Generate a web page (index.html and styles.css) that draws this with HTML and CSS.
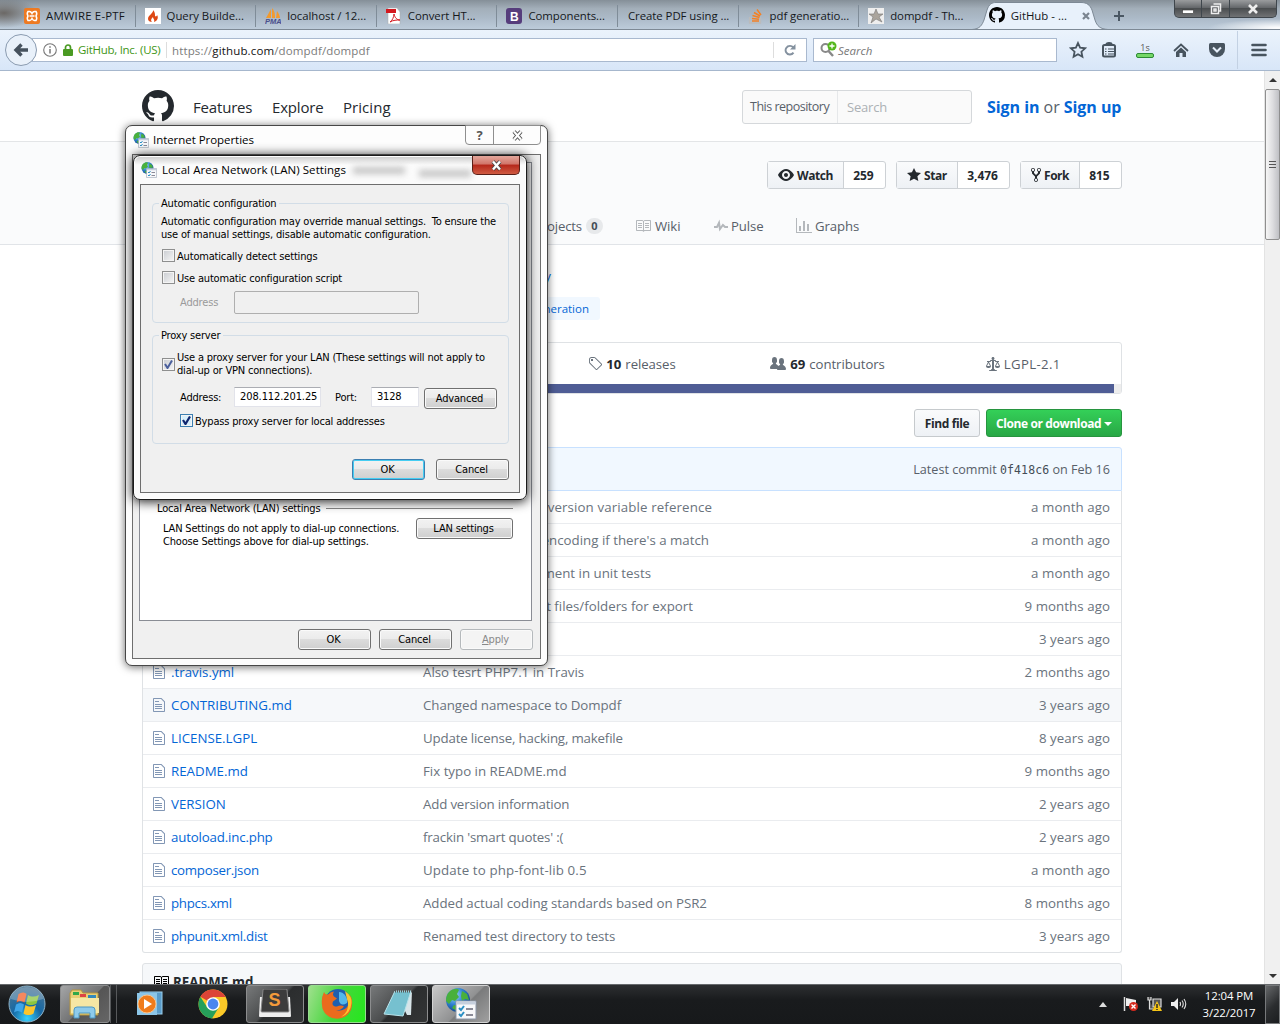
FILE: index.html
```html
<!DOCTYPE html>
<html lang="en">
<head>
<meta charset="utf-8">
<title>GitHub - dompdf/dompdf</title>
<link rel="stylesheet" href="styles.css">
</head>
<body>
<svg class="defs" width="0" height="0">
  <defs>
    <symbol id="mark" viewBox="0 0 16 16"><path d="M8 0C3.58 0 0 3.58 0 8c0 3.54 2.29 6.53 5.47 7.59.4.07.55-.17.55-.38 0-.19-.01-.82-.01-1.49-2.01.37-2.53-.49-2.69-.94-.09-.23-.48-.94-.82-1.13-.28-.15-.68-.52-.01-.53.63-.01 1.08.58 1.23.82.72 1.21 1.87.87 2.33.66.07-.52.28-.87.51-1.07-1.78-.2-3.64-.89-3.64-3.95 0-.87.31-1.59.82-2.15-.08-.2-.36-1.02.08-2.12 0 0 .67-.21 2.2.82.64-.18 1.32-.27 2-.27.68 0 1.36.09 2 .27 1.53-1.04 2.2-.82 2.2-.82.44 1.1.16 1.92.08 2.12.51.56.82 1.27.82 2.15 0 3.07-1.87 3.75-3.65 3.95.29.25.54.73.54 1.48 0 1.07-.01 1.93-.01 2.2 0 .21.15.46.55.38A8.013 8.013 0 0 0 16 8c0-4.42-3.58-8-8-8z"/></symbol>
    <symbol id="file" viewBox="0 0 12 16"><path d="M6 5H2V4h4v1zM2 8h7V7H2v1zm0 2h7V9H2v1zm0 2h7v-1H2v1zm10-7.5V14c0 .55-.45 1-1 1H1c-.55 0-1-.45-1-1V2c0-.55.45-1 1-1h7.5L12 4.5zM11 5L8 2H1v12h10V5z"/></symbol>
    <symbol id="book" viewBox="0 0 16 16"><path d="M3 5h4v1H3V5zm0 3h4V7H3v1zm0 2h4V9H3v1zm11-5h-4v1h4V5zm0 2h-4v1h4V7zm0 2h-4v1h4V9zm2-6v9c0 .55-.45 1-1 1H9.5l-1 1-1-1H2c-.55 0-1-.45-1-1V3c0-.55.45-1 1-1h5.500l1 1 1-1H15c.55 0 1 .45 1 1zm-8 .5L7.500 3H2v9h6V3.500zm7-.5H9.500l-.5.5V12h6V3z"/></symbol>
    <radialGradient id="globeFill" cx=".35" cy=".3" r=".8"><stop offset="0" stop-color="#9fdcff"/><stop offset=".5" stop-color="#2d7fd0"/><stop offset="1" stop-color="#123a7a"/></radialGradient>
    <symbol id="netprops" viewBox="0 0 32 32">
      <circle cx="13" cy="12" r="12" fill="url(#globeFill)"/>
      <path d="M4 4c4-4 9-4 10-2l-2 4 2 3-4 4-3-1-3 4-3-3c0-4 1-7 3-9zM17 3l5 3 2 6-4-1-3 2-1-5zM9 17l5 1 1 5h-3l-5-3z" fill="#49b03c"/>
      <path d="M11 13h20v18H11z" fill="#f7f8fa" stroke="#8b97a8"/><path d="M11.500 13.500h19v3h-19z" fill="#c5cfdd"/>
      <path d="M14 20l2 2 3-4M14 26l2 2 3-4" fill="none" stroke="#2a8fc4" stroke-width="2"/><path d="M21 21h7M21 27h7" stroke="#667" stroke-width="1.500"/>
    </symbol>
  </defs>
</svg>

<div class="screen">
  <header class="tabstrip">
    <div class="tabs">
      <div class="tab"><svg class="fav" viewBox="0 0 16 16"><rect width="16" height="16" rx="2" fill="#ee7a22"/><path d="M4 3.500h1.500Q7 3.500 8 5.500 9 3.500 10.500 3.500H12q1.500 2 0 4.500 1.500 2.500 0 4.500h-1.500Q9 12.500 8 10.500 7 12.500 5.500 12.500H4Q2.500 10.500 4 8 2.500 5.500 4 3.500zM5.500 8h5" fill="none" stroke="#fff" stroke-width="1.500"/></svg><span class="t1">AMWIRE E-PTF</span></div>
      <div class="tab"><svg class="fav" viewBox="0 0 16 16"><rect width="16" height="16" fill="#fff"/><path d="M8 2c1 3-5 5-5 9 0 2 2 3 4 3-2-2 0-4 1-5 0 2 2 2 1 5 3-1 5-4 3-7 0 1-1 2-2 1 0-2 0-4-2-6z" fill="#dd4814"/></svg><span>Query Builde...</span></div>
      <div class="tab"><svg class="fav" viewBox="0 0 16 16"><path d="M1 10L6 1v9zM7 10V0c3 3 3 7 3 10zM11 10l1-7c2 3 3 5 3 7z" fill="#f29a2e"/><text x="0" y="15.500" class="pma">PMA</text></svg><span>localhost / 12...</span></div>
      <div class="tab"><svg class="fav" viewBox="0 0 16 16"><path d="M2 0h9l3 4v12H2z" fill="#fff" stroke="#aaa" stroke-width=".5"/><path d="M0 1h10v4H0z" fill="#d4181f"/><path d="M4 14c2-1 4-5 4-8 1 4 3 6 6 6-3 0-7 0-10 2z" fill="none" stroke="#d4181f"/></svg><span>Convert HT...</span></div>
      <div class="tab"><svg class="fav" viewBox="0 0 16 16"><rect width="16" height="16" rx="3" fill="#563d7c"/><text x="4" y="12.500" class="bs">B</text></svg><span>Components...</span></div>
      <div class="tab tab-plain"><span>Create PDF using ...</span></div>
      <div class="tab"><svg class="fav" viewBox="0 0 16 16"><path d="M1.500 9v6h11V9" fill="none" stroke="#bbb" stroke-width="1.300"/><path d="M4 13h7M4 10.500l7 .8M4.500 7.500l7 2M6 4.500l6 3.500M9 1.500l4 5.500" stroke="#f48024" stroke-width="1.500"/></svg><span>pdf generatio...</span></div>
      <div class="tab"><svg class="fav" viewBox="0 0 16 16"><rect width="16" height="16" fill="#eee"/><path d="M8 1l2 5h5l-4 3 3 5-6-3-5 4 2-6-4-3h5z" fill="#aaa49c" stroke="#777" stroke-width=".6"/></svg><span>dompdf - Th...</span></div>
    </div>
    <div class="activetab">
      <svg class="tabshape" width="136" height="30" viewBox="0 0 136 30"><path d="M0 29.500C8 29 10 25 12 20L15 10C17 4 20 2.500 24 2.500H109C115 2.500 118 5 120 10L123 20C125 26 128 29 136 29.500V30H0z" fill="#e8f1fb"/><path d="M0 29.500C8 29 10 25 12 20L15 10C17 4 20 2.500 24 2.500H109C115 2.500 118 5 120 10L123 20C125 26 128 29 136 29.500" fill="none" stroke="#7d8995"/></svg>
      <svg class="fav"><use href="#mark"/></svg><span>GitHub - ...</span>
      <svg class="tabx" width="8" height="8"><path d="M1 1l6 6M7 1l-6 6" stroke="#7b8590" stroke-width="2.200"/></svg>
    </div>
    <svg class="plus" width="12" height="12"><path d="M6 1v10M1 6h10" stroke="#4a5763" stroke-width="2"/></svg>
    <div class="winbtns"><i><svg width="12" height="12"><rect x=".5" y="7" width="11" height="3.500" fill="#fff" stroke="#333" stroke-width=".6"/></svg></i><i><svg width="12" height="12"><path d="M3.500 1h7v7h-2M1.500 3.500h7v7h-7z M4 6h2v2H4z" fill="none" stroke="#eee" stroke-width="1.500"/></svg></i><i class="wide"><svg width="12" height="12"><path d="M2 2l8 8M10 2l-8 8" stroke="#eee" stroke-width="2.600"/></svg></i></div>
  </header>

  <nav class="toolbar">
    <div class="back"><svg width="16" height="16"><path d="M15 8H3M8.500 2.500L3 8l5.500 5.500" fill="none" stroke="#46525e" stroke-width="3.400"/></svg></div>
    <div class="url">
      <svg width="14" height="14"><circle cx="7" cy="7" r="6.300" fill="none" stroke="#777" stroke-width="1.100"/><path d="M7 6v4.500M7 3.300v1.500" stroke="#777" stroke-width="1.500"/></svg>
      <svg class="lock" width="10" height="12"><path d="M2.500 6V3.500a2.500 2.500 0 015 0V6" fill="none" stroke="#4a9a22" stroke-width="1.700"/><rect y="5" width="10" height="7" rx="1" fill="#4a9a22"/></svg>
      <span class="ident">GitHub, Inc. (US)</span>
      <span class="addr">https://<b>github.com</b>/dompdf/dompdf</span>
      <span class="reload"><svg width="12" height="12"><path d="M9.500 8.600A4.300 4.300 0 116 1.900c1.500 0 2.500.6 3.400 1.600" fill="none" stroke="#84919f" stroke-width="1.900"/><path d="M11.500 0v5.500H6z" fill="#84919f"/></svg></span>
    </div>
    <div class="search"><svg width="18" height="18"><circle cx="5.500" cy="7" r="4" fill="none" stroke="#888" stroke-width="2"/><path d="M8.500 10l4.500 5" stroke="#888" stroke-width="2.400"/><circle cx="12" cy="5" r="4.500" fill="#54b71c"/><path d="M12 2.500v5M9.500 5h5" stroke="#fff" stroke-width="1.300"/></svg><em>Search</em></div>
    <div class="tools">
      <svg width="18" height="18"><path d="M9 2l2.100 4.700 5 .6-3.700 3.400 1 5L9 13.200l-4.400 2.500 1-5L1.900 7.300l5-.6z" fill="none" stroke="#48545f" stroke-width="1.800"/></svg>
      <svg class="clip" width="16" height="18"><rect x="2" y="4" width="12" height="11.500" rx="1.500" fill="none" stroke="#48545f" stroke-width="2"/><path d="M5 3.500C5 1 11 1 11 3.500zM4 8h1.500M7 8h7M4 10.500h1.500M7 10.500h7M4 13h1.500M7 13h7" fill="#48545f" stroke="#48545f" stroke-width="1.100"/></svg>
      <div class="timer"><span>1s</span><i></i></div>
      <svg class="home" width="16" height="16"><path d="M1 9l7-6.500L15 9" fill="none" stroke="#48545f" stroke-width="1.800"/><path d="M3 10l5-4.500 5 4.500v5H9.500v-4h-3v4H3z" fill="#48545f"/></svg>
      <svg class="pocket" width="16" height="16"><path d="M0 2.500Q0 1 1.500 1h13Q16 1 16 2.500V7a8 8 0 01-16 0z" fill="#48545f"/><path d="M4 5.500L8 9.500l4-4" fill="none" stroke="#e6effa" stroke-width="2"/></svg>
      <div class="menu"><svg width="16" height="14"><path d="M1.500 2h13M1.500 7h13M1.500 12h13" stroke="#48545f" stroke-width="2.600" stroke-linecap="round"/></svg></div>
    </div>
  </nav>

  <div class="viewport">
    <main class="page">
      <div class="ghhead"><div class="wrap">
        <svg class="logo"><use href="#mark"/></svg>
        <span class="n1">Features</span><span class="n2">Explore</span><span class="n3">Pricing</span>
        <div class="ghsearch"><span>This repository</span><em>Search</em></div>
        <div class="sign"><b>Sign in</b> or <b>Sign up</b></div>
      </div></div>

      <div class="repohead">
        <div class="wrap social">
          <div class="btnset"><span class="btn w1"><svg width="16" height="16"><path d="M8.060 2C3 2 0 8 0 8s3 6 8.060 6C13 14 16 8 16 8s-3-6-7.940-6zM8 12c-2.200 0-4-1.780-4-4 0-2.200 1.800-4 4-4 2.220 0 4 1.800 4 4 0 2.220-1.780 4-4 4zm2-4c0 1.110-.89 2-2 2-1.110 0-2-.89-2-2 0-1.110.89-2 2-2 1.110 0 2 .89 2 2z"/></svg>Watch</span><span class="cnt c1">259</span></div>
          <div class="btnset"><span class="btn w2"><svg width="14" height="16"><path d="M14 6l-4.900-.64L7 1 4.900 5.360 0 6l3.600 3.260L2.670 14 7 11.670 11.330 14l-.93-4.740z"/></svg>Star</span><span class="cnt c2">3,476</span></div>
          <div class="btnset"><span class="btn w3"><svg width="10" height="16"><path fill-rule="evenodd" d="M8 1a1.993 1.993 0 0 0-1 3.720V6L5 8 3 6V4.720A1.993 1.993 0 0 0 2 1a1.993 1.993 0 0 0-1 3.720V6.500l3 3v1.780A1.993 1.993 0 0 0 5 15a1.993 1.993 0 0 0 1-3.720V9.500l3-3V4.720A1.993 1.993 0 0 0 8 1zM2 4.200C1.340 4.200.8 3.650.8 3c0-.65.55-1.200 1.200-1.200.65 0 1.200.55 1.200 1.200 0 .65-.55 1.200-1.200 1.200zm3 10c-.66 0-1.200-.55-1.200-1.200 0-.65.55-1.200 1.200-1.200.65 0 1.200.55 1.200 1.200 0 .65-.55 1.200-1.200 1.200zm3-10c-.66 0-1.200-.55-1.200-1.200 0-.65.55-1.200 1.200-1.200.65 0 1.200.55 1.200 1.200 0 .65-.55 1.200-1.200 1.200z"/></svg>Fork</span><span class="cnt c3">815</span></div>
        </div>
        <div class="wrap reponav">
          <span class="projects">Projects</span><span class="badge">0</span>
          <span class="item i1"><svg width="16" height="16"><use href="#book"/></svg>Wiki</span>
          <span class="item i2"><svg width="14" height="16"><path d="M11.500 8L8.800 5.400 6.600 8.500 5.500 1.600 2.380 8H0v2h3.600l.9-1.800.9 5.400L9 8.500l1.600 1.500H14V8z"/></svg>Pulse</span>
          <span class="item i3"><svg width="16" height="16"><path d="M16 14v1H0V0h1v14h15zM5 13H3V8h2v5zm4 0H7V3h2v10zm4 0h-2V6h2v7z"/></svg>Graphs</span>
        </div>
      </div>

      <div class="wrap body">
        <div class="desc"><a>library</a></div>
        <div class="topics"><a>pdf-generation</a></div>
        <div class="stats">
          <div class="statgrid">
            <div></div><div></div>
            <div><svg width="14" height="16"><path d="M7.730 1.730C7.260 1.260 6.620 1 5.960 1H3.500C2.130 1 1 2.130 1 3.500v2.470c0 .66.27 1.300.73 1.770l6.060 6.060c.39.39 1.020.39 1.410 0l4.590-4.590a.996.996 0 0 0 0-1.410L7.730 1.730zM2.380 7.090c-.31-.3-.47-.7-.47-1.130V3.500c0-.88.72-1.590 1.590-1.590h2.470c.42 0 .83.16 1.130.47l6.140 6.130-4.730 4.730-6.130-6.150zM3.010 3h2v2H3V3h.01z" fill-rule="evenodd"/></svg><b>10</b> releases</div>
            <div><svg width="16" height="16"><path d="M16 12.999c0 .439-.45 1-1 1H7.995c-.539 0-.994-.447-.995-.999H1c-.54 0-1-.561-1-1 0-2.634 3-4 3-4s.229-.409 0-1c-.841-.621-1.058-.59-1-3 .058-2.419 1.367-3 2.500-3s2.442.58 2.500 3c.058 2.410-.159 2.379-1 3-.229.59 0 1 0 1s1.549.711 2.420 2.088C9.196 9.369 10 8.999 10 8.999s.229-.409 0-1c-.841-.62-1.058-.59-1-3 .058-2.419 1.367-3 2.500-3s2.437.581 2.495 3c.059 2.410-.158 2.380-1 3-.229.59 0 1 0 1s3.005 1.366 3.005 4z"/></svg><b>69</b> contributors</div>
            <div><svg width="14" height="16"><path fill-rule="evenodd" d="M7 4c-.83 0-1.500-.67-1.500-1.500S6.170 1 7 1s1.500.67 1.500 1.500S7.830 4 7 4zm7 6c0 1.110-.89 2-2 2h-1c-1.110 0-2-.89-2-2l2-4h-1c-.55 0-1-.45-1-1H8v8c.42 0 1 .45 1 1h1c.42 0 1 .45 1 1H3c0-.55.58-1 1-1h1c0-.55.58-1 1-1h.03L6 5H5c0 .55-.45 1-1 1H3l2 4c0 1.110-.89 2-2 2H2c-1.110 0-2-.89-2-2l2-4H1V5h3c0-.55.45-1 1-1h4c.55 0 1 .45 1 1h3v1h-1l2 4zM2.500 7L1 10h3L2.500 7zM13 10l-1.500-3-1.500 3h3z"/></svg><span class="lic">LGPL-2.1</span></div>
          </div>
          <div class="lang"><i></i></div>
        </div>
        <div class="actions"><span class="find">Find file</span><span class="clone">Clone or download <i></i></span></div>
        <div class="commit">Latest commit <code>0f418c6</code> on Feb 16</div>
        <div class="files">
          <div class="row"><span class="msg cut m1">in version variable reference</span><time>a month ago</time></div>
          <div class="row"><span class="msg cut m2">encoding if there's a match</span><time>a month ago</time></div>
          <div class="row"><span class="msg cut m3">improvement in unit tests</span><time>a month ago</time></div>
          <div class="row"><span class="msg cut m4">relevant files/folders for export</span><time>9 months ago</time></div>
          <div class="row"><time>3 years ago</time></div>
          <div class="row"><svg><use href="#file"/></svg><a>.travis.yml</a><span class="msg">Also tesrt PHP7.1 in Travis</span><time>2 months ago</time></div>
          <div class="row hover"><svg><use href="#file"/></svg><a>CONTRIBUTING.md</a><span class="msg tight">Changed namespace to Dompdf</span><time>3 years ago</time></div>
          <div class="row"><svg><use href="#file"/></svg><a>LICENSE.LGPL</a><span class="msg tighter">Update license, hacking, makefile</span><time>8 years ago</time></div>
          <div class="row"><svg><use href="#file"/></svg><a>README.md</a><span class="msg">Fix typo in README.md</span><time>9 months ago</time></div>
          <div class="row"><svg><use href="#file"/></svg><a>VERSION</a><span class="msg tighter">Add version information</span><time>2 years ago</time></div>
          <div class="row"><svg><use href="#file"/></svg><a class="tighter">autoload.inc.php</a><span class="msg tighter">frackin 'smart quotes' :(</span><time>2 years ago</time></div>
          <div class="row"><svg><use href="#file"/></svg><a class="tighter2">composer.json</a><span class="msg wider">Update to php-font-lib 0.5</span><time>a month ago</time></div>
          <div class="row"><svg><use href="#file"/></svg><a class="tighter2">phpcs.xml</a><span class="msg tight">Added actual coding standards based on PSR2</span><time>8 months ago</time></div>
          <div class="row"><svg><use href="#file"/></svg><a class="tighter2">phpunit.xml.dist</a><span class="msg tight">Renamed test directory to tests</span><time>3 years ago</time></div>
        </div>
        <div class="readme"><svg width="16" height="16"><use href="#book"/></svg>README.md</div>
      </div>
    </main>
    <div class="scrollbar"><i class="up"></i><div class="thumb"></div><i class="down"></i></div>
  </div>

  <footer class="taskbar">
    <svg class="orb" width="38" height="38" viewBox="0 0 38 38"><defs><radialGradient id="orb" cx=".5" cy=".9" r=".9"><stop offset="0" stop-color="#35d2ff"/><stop offset=".45" stop-color="#1668a4"/><stop offset="1" stop-color="#4d7592"/></radialGradient></defs><circle cx="19" cy="19" r="18" fill="url(#orb)" stroke="#8fb3c8"/><path d="M10.500 9c3-2 6-2 8 0l-2 8.500c-3-2-5.500-2-8 0z" fill="#f0612a"/><path d="M20 10c3 2 7 2 11 0l-2.500 8.500c-4 2-7.500 2-10.500 0z" fill="#8cc63e"/><path d="M8 19.500c3-2 5.500-2 8 0l-2 8c-3-2-5.500-2-8 0z" fill="#3fa5e8"/><path d="M17.500 20c3 2 7 2 10.500 0l-2.500 8.500c-3 2-7 2-10 0z" fill="#fcc52c"/><path d="M3 14a16 12 0 0132 0q-16 6-32 0z" fill="#fff" opacity=".25"/></svg>
    <div class="task explorer"><svg width="34" height="30"><path d="M2 4l2-3h9l2 3h15v22H2z" fill="#e8cf74" stroke="#b4943e"/><path d="M5 3h6v3H5z" fill="#2fa84a"/><path d="M12 5h6v3h-6z" fill="#d44"/><path d="M20 6h8v3h-8z" fill="#38b"/><path d="M3 9h28v15H3z" fill="#f6e7a4"/><path d="M6 29v-8q0-3 3-3h15q3 0 3 3v8h-5v-5H11v5z" fill="#8ecbeb" stroke="#4c98c4"/></svg></div>
    <div class="stack"></div>
    <svg class="wmp" width="28" height="26"><rect x="4" y="1" width="22" height="22" fill="#5a9cc9" stroke="#9bd0ee"/><rect x="1" y="2" width="20" height="22" fill="#8cc6e8"/><circle cx="11" cy="13" r="9" fill="#f07c1c" stroke="#fbc38a"/><path d="M8 8l8 5-8 5z" fill="#fff"/></svg>
    <svg class="chrome" width="30" height="30" viewBox="0 0 30 30"><circle cx="15" cy="15" r="14.500" fill="#fbc928"/><path d="M15 15L2.400 7.800A14.500 14.500 0 0127.600 8H15z" fill="#dc4437"/><path d="M2.400 7.800A14.500 14.500 0 0014 29.500L21 18l-6 3-6-3z" fill="#26a05a"/><circle cx="15" cy="15" r="6.800" fill="#fff"/><circle cx="15" cy="15" r="5.400" fill="#4a86ef"/></svg>
    <div class="task w58 subl"><svg width="32" height="30"><path d="M1 8h30l1 19q0 1-1 1H1q-1 0-1-1z" fill="#eee"/><path d="M4 1q0-1 1-1h22q1 0 1 1l2 21q0 1-1 1H3q-1 0-1-1z" fill="#3c3c3c" stroke="#888"/><text x="9.500" y="16.500" class="st">S</text></svg></div>
    <div class="task w58 green"><svg width="32" height="32" viewBox="0 0 32 32"><circle cx="17" cy="14.500" r="13.500" fill="#1f5fae"/><path d="M18 4a9 9 0 018 11q-6 4-8-2z" fill="#54b8ea"/><path d="M3 4q1 3 4 2.500 3-3 6-3-2 3 0 5l3 2-4 3q-2 5 4 5 4-2 7 0-3 4-8 4 9 1 12-5 3-6 1-12 4 5 3 11A15 14 0 011 17Q0 10 3 4z" fill="#ea6b1d"/><path d="M24 3q7 5 6.500 12-1 11-10.500 14 8-5 7-14z" fill="#fcc42d"/></svg></div>
    <div class="task w58 note"><svg width="32" height="32"><path d="M12 3h17l-1 24H24z" fill="#d7e4e8"/><path d="M12 3h16l-8 25L1 26z" fill="#76c0cf" stroke="#b8e3ea"/><path d="M12 3h17" stroke="#555" stroke-width="3" stroke-dasharray="1 1"/></svg></div>
    <div class="task w58 lit"><svg width="32" height="32"><use href="#netprops"/></svg></div>
    <div class="tray">
      <svg width="8" height="5"><path d="M0 5l4-5 4 5z" fill="#ddd"/></svg>
      <svg class="flag" width="16" height="16"><path d="M1.500 1v14" stroke="#ddd" stroke-width="1.500"/><path d="M3 2l5 1 5 1v6H3z" fill="#eee"/><circle cx="10.500" cy="10.500" r="4.500" fill="#d42a1e"/><path d="M8.500 8.500l4 4M12.500 8.500l-4 4" stroke="#fff" stroke-width="1.400"/></svg>
      <svg class="net" width="16" height="16"><path d="M1 1v3h3V1M2.500 4v9h4M6 3h8v8H6z" fill="#555" stroke="#ddd" stroke-width="1.200"/><path d="M10 5l5 10H5z" fill="#f5c417"/><path d="M10 8v4M10 13v1" stroke="#222" stroke-width="1.400"/></svg>
      <svg class="snd" width="16" height="14"><path d="M0 5h3l4-4v12L3 9H0z" fill="#eee"/><path d="M9 5q1 2 0 4M11 3.500q2.500 3.500 0 7M13 2q3.500 5 0 10" fill="none" stroke="#ddd" stroke-width="1.100"/></svg>
      <div class="clock"><span>12:04 PM</span><span>3/22/2017</span></div>
      <div class="peek"></div>
    </div>
  </footer>
</div>

<section class="win props">
  <div class="title"><svg width="16" height="16"><use href="#netprops"/></svg><span>Internet Properties</span>
    <div class="capbtns"><i>?</i><i class="capx"><svg width="13" height="11"><path d="M3 1.500l7 8M10 1.500l-7 8" stroke="#555" stroke-width="4"/><path d="M3 1.500l7 8M10 1.500l-7 8" stroke="#fff" stroke-width="2"/></svg></i></div></div>
  <div class="client">
    <div class="sheet">
      <div class="grouphead"><span>Local Area Network (LAN) settings</span><hr></div>
      <div class="lanrow"><p>LAN Settings do not apply to dial-up connections.<br>Choose Settings above for dial-up settings.</p><button class="lanbtn">LAN settings</button></div>
    </div>
    <div class="dlgbtns"><button>OK</button><button>Cancel</button><button class="off"><u>A</u>pply</button></div>
  </div>
</section>

<section class="win lan">
  <div class="title"><svg width="16" height="16"><use href="#netprops"/></svg><span class="lt">Local Area Network (LAN) Settings</span>
    <div class="glass"><b></b><b></b></div>
    <div class="redx"><svg width="13" height="11"><path d="M3 1.500l7 8M10 1.500l-7 8" stroke="#444" stroke-width="4"/><path d="M3 1.500l7 8M10 1.500l-7 8" stroke="#fff" stroke-width="2.400"/></svg></div></div>
  <div class="client">
    <fieldset class="g1"><legend>Automatic configuration</legend>
      <p class="auto">Automatic configuration may override manual settings.&nbsp; To ensure the<br>use of manual settings, disable automatic configuration.</p>
      <label class="ck1"><i class="box"></i><span>Automatically detect settings</span></label>
      <label class="ck2"><i class="box"></i><span>Use automatic configuration script</span></label>
      <div class="addrow"><span>Address</span><div class="dis"></div></div>
    </fieldset>
    <fieldset class="g2"><legend>Proxy server</legend>
      <label class="ck3"><i class="box"><svg width="9" height="9"><path d="M1 4l2.500 4L8 .5" fill="none" stroke="#4a5f9c" stroke-width="2"/></svg></i><span>Use a proxy server for your LAN (These settings will not apply to<br>dial-up or VPN connections).</span></label>
      <div class="proxy"><span class="pa">Address:</span><div class="inp ia">208.112.201.25</div><span class="pp">Port:</span><div class="inp ip">3128</div><button>Advanced</button></div>
      <label class="ck4"><i class="box hot"><svg width="9" height="9"><path d="M1 4l2.500 4L8 .5" fill="none" stroke="#10256e" stroke-width="2.200"/></svg></i><span>Bypass proxy server for local addresses</span></label>
    </fieldset>
    <div class="dlgbtns"><button class="def">OK</button><button>Cancel</button></div>
  </div>
</section>
</body>
</html>
```
FILE: styles.css
```css
* { box-sizing: border-box; }
body { margin: 0; width: 1280px; height: 1024px; overflow: hidden; position: relative; font-family: "Open Sans", "Noto Sans", sans-serif; background: #fff; }
svg { flex: none; display: block; }
i { font-style: normal; }
.defs { position: absolute; }
.screen { display: flex; flex-direction: column; width: 1280px; height: 1024px; white-space: nowrap; }

/* browser chrome */
.tabstrip { height: 30px; flex: none; display: flex; padding-left: 15px; border-bottom: 1px solid #7d8995; font-size: 11.4px; color: #15181b; overflow: hidden;
  background: radial-gradient(ellipse 34px 15px at 4px 13px, #6b6865, transparent), radial-gradient(ellipse 70px 9px at 1278px 28px, #fff, transparent), linear-gradient(#858f98 0, #a3afba 30%, #abb9c7 60%, #bccbda 100%); }
.tabs { display: flex; }
.tab { width: 120.6px; height: 22px; margin-top: 5px; padding: 0 0 0 9px; display: flex; align-items: center; gap: 6px; border-right: 1px solid #7f8c98; }
.tab span { line-height: 22px; letter-spacing: -.05px; }
.tab .t1 { letter-spacing: .2px; }
.tab:last-child { border: 0; }
.fav { width: 16px; height: 16px; margin-right: 0; }
.tab-plain { padding-left: 10px; }
.pma { font: italic bold 7.500px "Liberation Sans", sans-serif; fill: #4a4f8c; }
.bs { font: bold 12px "Liberation Sans", sans-serif; fill: #fff; }
.activetab { position: relative; width: 136px; height: 30px; margin-left: -8px; padding-left: 17px; display: flex; align-items: center; gap: 6px; }
.tabshape { position: absolute; left: 0; top: 0; z-index: 0; }
.activetab .fav, .activetab span, .tabx { position: relative; z-index: 1; }
.activetab span { width: 59px; }
.activetab .tabx { margin-left: 6px; margin-top: 1px; }
.plus { margin: 10px 0 0 5px; }
.winbtns { margin-left: auto; margin-right: 3px; display: flex; width: 103px; height: 18px; border: 1px solid #3f464c; border-top: 0; border-radius: 0 0 5px 5px; background: linear-gradient(#9a9c9e, #65686b 45%, #4b4e50 50%, #707274); }
.winbtns i { width: 28px; display: flex; justify-content: center; align-items: center; border-right: 1px solid #3f464c; }
.winbtns .wide { width: 47px; border: 0; }
.toolbar { height: 41px; flex: none; display: flex; align-items: center; padding-left: 5px; border-bottom: 1px solid #a6b7cd; background: linear-gradient(#ebf3fc, #d8e6f8); font-size: 11.5px; }
.back { width: 32px; height: 32px; border: 1px solid #8a9bb0; border-radius: 50%; background: #e9f1fa; display: flex; align-items: center; justify-content: center; z-index: 1; }
.url { width: 775px; height: 24px; margin-left: -5px; border: 1px solid #a9b9cf; background: #fff; display: flex; align-items: center; padding-left: 10px; color: #7b7b7b; }
.lock { margin: 0 5px 0 6px; }
.ident { color: #419616; width: 89px; border-right: 1px solid #ddd; line-height: 16px; letter-spacing: -.28px; }
.addr { margin-left: 5px; letter-spacing: .14px; }
.addr b { font-weight: 400; color: #111; }
.reload { margin-left: auto; width: 33px; height: 16px; border-left: 1px solid #ddd; padding: 2px 0 0 10px; }
.search { width: 244px; height: 24px; margin-left: 6px; border: 1px solid #a9b9cf; background: #fff; display: flex; align-items: center; padding-left: 6px; color: #777; }
.tools { display: flex; align-items: center; flex: 1; height: 40px; padding-left: 12px; }
.clip { margin-left: 14px; }
.timer { width: 18px; margin-left: 19px; display: flex; flex-direction: column; align-items: center; font-size: 9px; line-height: 11px; color: #555; }
.timer i { width: 18px; height: 5px; border: 1px solid #2c8a35; border-radius: 2px; background: #75d767; }
.home { margin-left: 19px; }
.pocket { margin-left: 20px; }
.menu { height: 38px; margin-left: 12px; padding-left: 13px; border-left: 1px solid #c3d1e3; display: flex; align-items: center; }

/* page */
.viewport { height: 913px; display: flex; overflow: hidden; }
.page { width: 1264px; }
.wrap { width: 980px; margin: 0 auto; display: flex; }
.ghhead { height: 71px; border-bottom: 1px solid #e3e5e7; }
.ghhead .wrap { height: 72px; align-items: center; font-size: 15px; color: #24292e; }
.logo { width: 32px; height: 32px; fill: #24292e; margin-top: -2px; }
.n1 { margin-left: 19px; width: 79px; } .n2 { width: 71px; } .n3 { width: 399px; }
.n1, .n2, .n3 { letter-spacing: -.18px; }
.n3 { letter-spacing: .05px; }
.ghsearch { width: 230px; height: 34px; border: 1px solid #d5d8db; border-radius: 3px; background: #fafafa; display: flex; align-items: center; font-size: 12.300px; color: #586069; }
.ghsearch span { width: 95px; line-height: 32px; padding-left: 7px; border-right: 1px solid #e6e8ea; letter-spacing: -.5px; font-size: 12.500px; }
.ghsearch em { font-style: normal; color: #acb1b5; font-size: 13px; padding-left: 9px; letter-spacing: -.2px; }
.sign { margin-left: 15px; color: #586069; font-size: 16px; letter-spacing: -.05px; }
.sign b { color: #0366d6; }
.repohead { height: 103px; background: #fafbfc; border-bottom: 1px solid #e1e4e8; }
.social { justify-content: flex-end; gap: 10px; padding-top: 19px; height: 66px; }
.btnset { display: flex; height: 28px; border: 1px solid #cdd1d5; border-radius: 3px; background: #fff; font-size: 12px; font-weight: 700; color: #24292e; line-height: 27px; letter-spacing: -.45px; }
.btn { display: flex; align-items: center; gap: 3px; padding-left: 10px; border-right: 1px solid #cdd1d5; background: linear-gradient(#fafbfc, #eef1f5); }
.btn svg { fill: #24292e; }
.w1 { width: 76px; } .w2 { width: 61px; } .w3 { width: 59px; }
.cnt { text-align: center; letter-spacing: -.1px; padding-right: 2px; }
.c1 { width: 41px; } .c2 { width: 51px; } .c3 { width: 41px; }
.reponav { height: 36px; align-items: center; color: #586069; font-size: 13.200px; }
.projects { width: 445px; text-align: right; margin-left: -5px; letter-spacing: -.15px; }
.badge { width: 17px; height: 16px; line-height: 16px; margin-left: 4px; border-radius: 8px; background: #e7e9eb; font-size: 11px; font-weight: 700; text-align: center; color: #444d56; }
.item { display: flex; align-items: center; gap: 3px; letter-spacing: -.1px; }
.item svg { fill: #b4b8bc; }
.i1 { margin-left: 32px; width: 78px; } .i2 { width: 82px; margin-left: 1px; }
.i1 svg { margin-right: 1px; }
.body { flex-direction: column; }
.desc { height: 52px; width: 409px; text-align: right; padding-top: 21px; font-size: 13.300px; line-height: 20px; }
a { color: #0366d6; }
.topics { height: 45px; width: 458px; text-align: right; font-size: 11.500px; line-height: 23px; display: flex; justify-content: flex-end; }
.topics a { height: 23px; padding: 0 11px; border-radius: 3px; background: #f1f8ff; }
.stats { height: 52px; border: 1px solid #dfe2e5; border-radius: 3px; }
.statgrid { display: grid; grid-template-columns: repeat(5, 1fr); height: 41px; align-items: center; font-size: 13.200px; color: #586069; letter-spacing: -.06px; }
.statgrid div { display: flex; justify-content: center; gap: 4px; align-items: center; padding-top: 1px; }
.statgrid svg { fill: #6a737d; }
.statgrid b { color: #24292e; }
.lic { letter-spacing: .35px; }
.lang { height: 9px; background: #ededed; }
.lang i { display: block; width: 971px; height: 9px; background: #4f5d95; }
.actions { height: 53px; padding-top: 15px; display: flex; justify-content: flex-end; gap: 6px; font-size: 12px; font-weight: 700; letter-spacing: -.4px; }
.actions span { height: 28px; line-height: 27px; text-align: center; border: 1px solid #c6cacd; border-radius: 3px; }
.find { width: 66px; background: linear-gradient(#fafbfc, #eef1f5); color: #24292e; }
.clone { width: 136px; color: #fff; background: linear-gradient(#34d058, #28a745); }
.actions .clone { border-color: #27943f; }
.clone i { display: inline-block; border: 4px solid transparent; border-top-color: #fff; border-bottom: 0; vertical-align: 2px; }
.commit { height: 44px; line-height: 43px; border: 1px solid #c8e1ff; border-radius: 3px 3px 0 0; background: #f1f8ff; text-align: right; padding-right: 11px; color: #586069; font-size: 12.600px; }
.commit code { font: 11.500px "DejaVu Sans Mono", monospace; color: #444d56; letter-spacing: .1px; }
.files { border: 1px solid #dfe2e5; border-top: 0; border-radius: 0 0 3px 3px; }
.row { height: 33px; display: flex; align-items: center; padding: 0 11px 1px 10px; border-bottom: 1px solid #eaecef; font-size: 13.300px; color: #6a737d; }
.row:last-child { border: 0; height: 32px; }
.row svg { width: 12px; height: 16px; fill: #8297b5; margin-right: 6px; margin-top: 1px; }
.row a { width: 252px; }
.row time { margin-left: auto; letter-spacing: .06px; }
.tight { letter-spacing: -.06px; } .tighter { letter-spacing: -.18px; } .tighter2 { letter-spacing: -.28px; } .wider { letter-spacing: .12px; }
.cut { text-align: right; }
.m1 { width: 559px; letter-spacing: .12px; } .m2 { width: 556px; } .m3 { width: 498px; } .m4 { width: 540px; }
.hover { background: #f6f8fa; }
.readme { height: 44px; margin-top: 10px; border: 1px solid #dfe2e5; border-radius: 3px; background: #f6f8fa; display: flex; align-items: center; gap: 4px; padding: 0 10px 6px; font-size: 13.300px; font-weight: 700; color: #24292e; }
.scrollbar { width: 16px; background: #f0f0f0; border-left: 1px solid #e3e3e3; display: flex; flex-direction: column; align-items: center; }
.up { border: 4px solid transparent; border-top: 0; border-bottom-color: #333; margin: 7px 0; }
.down { border: 4px solid transparent; border-bottom: 0; border-top-color: #333; margin: auto 0 6px; }
.thumb { width: 15px; height: 151px; border: 1px solid #8f8f8f; border-radius: 2px; background: repeating-linear-gradient(#555 0 1px, transparent 1px 3px) 3px 71px / 7px 8px no-repeat, linear-gradient(90deg, #f6f6f6, #dedee0 50%, #bfc0c4); }

/* taskbar */
.taskbar { height: 40px; flex: none; display: flex; align-items: center; background: linear-gradient(#66696c 0 1px, #2d2f31 1px, #191b1d 40%, #17191b); }
.orb { margin-left: 8px; }
.task { height: 38px; display: flex; align-items: center; justify-content: center; border: 1px solid #8c8d8e; border-radius: 3px; background: linear-gradient(135deg, #77797a 0, #4a4c4d 48%, #2b2d2e 52%, #333536); }
.explorer { width: 50px; margin-left: 14px; background: linear-gradient(135deg, #a5a6a7, #737475 50%, #555 52%, #666); }
.stack { width: 7px; height: 38px; border: solid #57595b; border-width: 0 1px; }
.wmp { margin-left: 19px; } .chrome { margin: 0 18px 0 34px; }
.w58 { width: 58px; margin-right: 4px; }
.green { background: linear-gradient(110deg, #9fe08d 0, #45d63c 50%, #24e81c); border-color: #97dd90; }
.lit { background: linear-gradient(135deg, #c9c9c9, #909192 55%, #7a7b7c 57%, #a0a0a0); border-color: #d3d3d3; }
.st { font: bold 18px "Liberation Sans", sans-serif; fill: #f39a3a; }
.tray { margin-left: auto; display: flex; align-items: center; height: 40px; color: #fff; font-size: 11.400px; }
.flag { margin-left: 16px; } .net { margin-left: 8px; } .snd { margin-left: 8px; }
.clock { width: 70px; margin: 0 1px 0 7px; display: flex; flex-direction: column; align-items: center; line-height: 17px; letter-spacing: -.1px; }
.peek { width: 15px; height: 39px; border: 1px solid #77797b; background: linear-gradient(135deg, #66686a, #2b2d2f 55%, #1b1d1f); }

/* dialogs */
.win { position: absolute; border: 1px solid #474747; border-radius: 7px; font: 11px "DejaVu Sans Condensed", "DejaVu Sans", sans-serif; letter-spacing: -.18px; color: #000; white-space: nowrap; }
.win .title { display: flex; align-items: center; position: relative; font: 11.500px "Open Sans", sans-serif; letter-spacing: -.05px; }
.title > span { margin-top: -2px; }
.title .lt { letter-spacing: .07px; }
.win .client { background: #f0f0f0; border: 1px solid #6e6e6e; }
.win button { font: inherit; letter-spacing: inherit; color: inherit; padding: 0 2px 0 0; width: 73px; height: 21px; border: 1px solid #707070; border-radius: 3px; background: linear-gradient(#f2f2f2, #ebebeb 48%, #dcdcdc 50%, #cfcfcf); box-shadow: inset 0 0 0 1px #fafafa; }
.win p { margin: 0; line-height: 13px; }
.props { left: 125px; top: 125px; width: 423px; height: 541px; background: #fdfdfd; box-shadow: 0 1px 8px rgba(0,0,0,.6); padding: 0 6px; }
.props .title { height: 28px; gap: 4px; padding-left: 1px; }
.capbtns { position: absolute; right: 0; top: -1px; width: 76px; height: 20px; border: 1px solid #8f8f8f; border-radius: 0 0 4px 4px; display: flex; color: #555; font: bold 13px/19px "Open Sans", sans-serif; }
.capbtns i { width: 28px; text-align: center; border-right: 1px solid #8f8f8f; }
.capbtns .capx { width: 46px; border: 0; display: flex; align-items: center; justify-content: center; }
.props .client { height: 505px; padding: 7px 7px 0 6px; display: flex; flex-direction: column; }
.sheet { width: 393px; height: 459px; background: #fff; border: 1px solid #8a8d95; padding: 338px 18px 0 17px; }
.grouphead { display: flex; align-items: center; gap: 6px; height: 15px; }
.grouphead hr { flex: 1; border: 0; border-top: 1px solid #888; margin: 0; }
.lanrow { display: flex; justify-content: space-between; padding: 1px 0 0 6px; }
.lanrow p { padding-top: 5px; }
.win .lanbtn { width: 97px; margin-top: 1px; }
.dlgbtns { display: flex; justify-content: flex-end; }
.props .dlgbtns { gap: 8px; margin-top: 8px; }
.win .off { color: #888; border-color: #b5b9bc; background: #f4f4f4; }
.lan { left: 133px; top: 155px; width: 394px; height: 345px; padding: 0 6px; border-color: #1b1b1b; background: linear-gradient(#c9c9c9 0, #fbfbfb 9px, #fbfbfb 100%); box-shadow: 0 1px 11px 1px rgba(0,0,0,.85), inset 0 0 0 1px #fff; }
.lan .title { height: 28px; gap: 5px; padding-left: 1px; }
.glass { display: flex; gap: 14px; margin-left: 2px; filter: blur(3px); }
.glass b { width: 52px; height: 7px; margin-top: 3px; background: #c4c4c4; }
.glass b + b { margin-top: 6px; }
.redx { position: absolute; right: 0; top: 0; width: 48px; height: 19px; border: 1px solid #5a1f17; border-top: 0; border-radius: 0 0 5px 5px; background: linear-gradient(#e3a79c, #d17468 45%, #b5271a 50%, #cf5b42); display: flex; align-items: center; justify-content: center; }
.lan .client { height: 309px; padding: 10px 10px 0 11px; }
fieldset { margin: 0; padding: 0 7px; border: 1px solid #d2dde7; border-radius: 4px; min-width: 0; }
legend { padding: 0 3px 0 2px; margin-left: -1px; line-height: 17px; height: 16px; }
.g1 { height: 128px; } .g2 { height: 117px; margin-top: 4px; }
.auto { padding-top: 4px; padding-left: 1px; }
.lan label { display: flex; align-items: center; padding-left: 2px; gap: 2px; height: 13px; }
.lan label span { padding-top: 1px; }
.box { width: 13px; height: 13px; flex: none; border: 1px solid #8e8f8f; background: linear-gradient(135deg, #c9ccd1, #f6f6f6); box-shadow: inset 0 0 0 1px #f4f4f4; display: flex; align-items: center; justify-content: center; }
.hot { border-color: #3c7fb1; background: #d8effb; }
.lan .ck1 { margin-top: 8px; } .lan .ck2 { margin-top: 9px; }
.addrow { display: flex; align-items: center; margin: 7px 0 0 20px; color: #9a9a9a; }
.addrow span { width: 54px; }
.dis { width: 185px; height: 23px; border: 1px solid #afafaf; border-radius: 2px; }
.lan .ck3 { height: 26px; line-height: 13px; margin-top: 8px; }
.lan .ck3 span { padding: 0; }
.proxy { display: flex; align-items: center; margin: 9px 0 0 20px; height: 22px; }
.pa { width: 54px; } .pp { width: 36px; margin-left: 14px; }
.inp { height: 20px; line-height: 18px; border: 1px solid #e2e3ea; border-top-color: #abadb3; background: #fff; padding-left: 5px; overflow: hidden; }
.ia { width: 87px; letter-spacing: -.1px; } .ip { width: 48px; margin-right: 5px; }
.proxy button { margin-top: 2px; }
.lan .ck4 { margin: 6px 0 0 18px; }
.lan .dlgbtns { gap: 11px; margin-top: 15px; }
.win .def { border-color: #3c7fb1; box-shadow: inset 0 0 0 1px #45cdf2; }
```
